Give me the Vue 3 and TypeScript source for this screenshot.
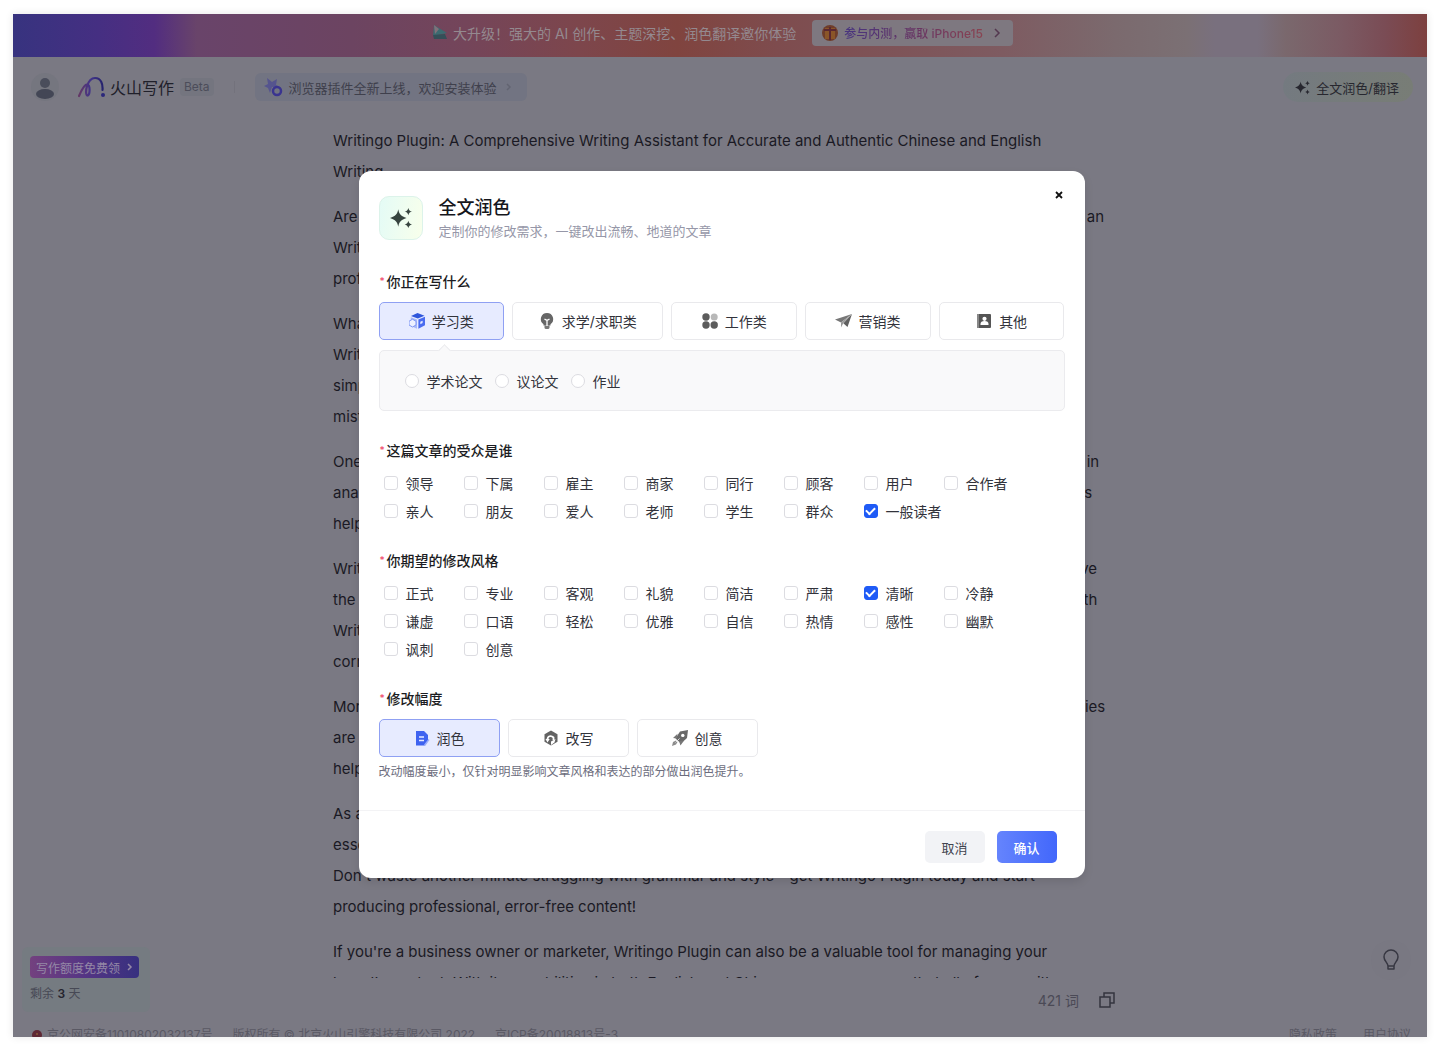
<script setup lang="ts">
import { ref } from 'vue'

interface Option {
  label: string
  icon: string
  wide?: boolean
}

const paragraphs: string[][] = [
  [
    'Writingo Plugin: A Comprehensive Writing Assistant for Accurate and Authentic Chinese and English',
    'Writing',
  ],
  [
    'Are you tired of making grammar mistakes in your writing and looking for a powerful solution every day as an',
    'Writingo Plugin is the tool you need to improve your writing, whether you are a student or a',
    'professional writer.',
  ],
  [
    'What sets Writingo Plugin apart from other writing tools is its full support for two languages.',
    'Writingo Plugin can check your spelling, grammar and punctuation in Chinese and English,',
    'simply by installing it in your browser, so that you can write freely without worrying about',
    'mistakes.',
  ],
  [
    'One of the great features of Writingo Plugin is the advanced and accurate artificial intelligence that is built in',
    'analyzing your text as you type, it also offers suggestions for grammar, word choice, clarity and tone errors',
    'helping you to write better.',
  ],
  [
    'Writingo Plugin also offers you detailed feedback on your writing, so that you can always study and improve',
    'the quality of your work over time. It describes each suggestion and lets you compare all of the options with',
    'Writing samples, so that each of your sentences is clear, fluent and',
    'correct.',
  ],
  [
    'Moreover, Writingo Plugin is easy to install and works with all of the major web sites and business companies',
    'are able to use it every day for their emails, documents and reports, which can',
    'help teams save time.',
  ],
  [
    'As a writer, you know how important good writing is. Writingo Plugin is an',
    'essential tool for anyone who wants to write well in English and Chinese.',
    "Don't waste another minute struggling with grammar and style - get Writingo Plugin today and start",
    'producing professional, error-free content!',
  ],
  [
    "If you're a business owner or marketer, Writingo Plugin can also be a valuable tool for managing your",
    "brand's content. With its capabilities in both English and Chinese, you can ensure that all of your writt",
  ],
]

const kinds: Option[] = [
  {
    label: '学习类',
    icon: '<path d="M8.5 0 15.500 2.700 8.800 5.600 2 3.100Z" fill="#2f56dc"/><path d="M9.400 6.500 16 3.700V12.200L9.400 15.800Z" fill="#4a6cf0"/><path d="M11.300 8.700 13.600 7.700V10L11.300 11.200Z" fill="#e6ebff"/><path d="M1.800 4.200 8 6.500V15.800L1.800 13Z" fill="#a9b9f8"/><path d="M3.500 6.200 7 8.300V12L3.500 14 0 12V8.300Z" fill="#eef1ff" stroke="#7f97f5" stroke-width="1"/>',
  },
  {
    label: '求学/求职类',
    wide: true,
    icon: '<path d="M8 0a6.200 6.200 0 0 1 3.500 11.300V12.500h-7V11.300A6.200 6.200 0 0 1 8 0Z" fill="#666"/><path d="M5.500 12.500h5v1.900a1.600 1.600 0 0 1-1.600 1.600H7.100A1.600 1.600 0 0 1 5.500 14.400Z" fill="#777"/><path d="M8 13V7M5.500 6.200 8 7.300l2.500-1.100" fill="none" stroke="#fff" stroke-width="1.300"/>',
  },
  {
    label: '工作类',
    icon: '<circle cx="4" cy="4" r="3.700" fill="#5c5c5c"/><circle cx="12.200" cy="4" r="3.500" fill="#b8b8b8"/><circle cx="4" cy="12" r="3.700" fill="#5c5c5c"/><circle cx="12.200" cy="12" r="3.700" fill="#5c5c5c"/>',
  },
  {
    label: '营销类',
    icon: '<path d="M0 6.500 17 1 6 9.500Z" fill="#777"/><path d="M17 1 12.500 14 8.300 10.200Z" fill="#606060"/><path d="M17 1 6 9.500v5l2.300-4.300Z" fill="#999"/>',
  },
  {
    label: '其他',
    icon: '<rect x="1" y="1" width="14" height="14" rx="1" fill="#555"/><rect x="1" y="1" width="2" height="14" fill="#888"/><circle cx="8.500" cy="5.800" r="2.100" fill="#fff"/><path d="M4.500 12V11a4 3 0 0 1 8 0v1Z" fill="#fff"/>',
  },
]

const levels: Option[] = [
  {
    label: '润色',
    icon: '<path d="M2 1h8l4 4v6l-3 4.500H2Z" fill="#3f63f0"/><path d="M5 7h5M5 10.500h5" stroke="#e6ebff" stroke-width="1.300"/><path d="m14.500 9 1 1-4 5.500-1.500.5.300-1.800Z" fill="#9db0fa"/>',
  },
  {
    label: '改写',
    icon: '<path d="M8 .5 14.500 4.200V11.800L8 15.500 1.500 11.800V4.200Z" fill="#636363"/><path d="M4.500 9.500C4.500 6 8 5 10.500 7.500V10" fill="none" stroke="#fff" stroke-width="1.800"/><path d="M2.500 9h4.200L4.500 12.500ZM8 11.500l4.500-2.500-1 3.500L8 15Z" fill="#fff"/>',
  },
  {
    label: '创意',
    icon: '<path d="M8 1.500 16 0l-1 8-6 5.500-5.500-5Z" fill="#686868"/><path d="M5.500 3.800 1 8l4 .5ZM12 10.500 8.500 15.500 7 11Z" fill="#777"/><path d="M4 10.500 1 12 0 16l4-1.500 1.500-2.500Z" fill="#8c8c8c"/><circle cx="10.800" cy="5.400" r="1.700" fill="#fff"/><path d="m3.500 12.500 4-4" stroke="#ddd" stroke-width="1"/>',
  },
]

const sparkle =
  'M9 2.500C10 8 12 10 18 12 12 14 10 16 9 21.500 8 16 6 14 0 12 6 10 8 8 9 2.500Z' +
  'M20 1C20.700 3.500 21.500 4.300 24 5 21.500 5.700 20.700 6.500 20 9 19.300 6.500 18.500 5.700 16 5 18.500 4.300 19.300 3.500 20 1Z' +
  'M20 15C20.700 17.500 21.500 18.300 24 19 21.500 19.700 20.700 20.500 20 23 19.300 20.500 18.500 19.700 16 19 18.500 18.300 19.300 17.500 20 15Z'

const topics = ['学术论文', '议论文', '作业']
const audiences = ['领导', '下属', '雇主', '商家', '同行', '顾客', '用户', '合作者', '亲人', '朋友', '爱人', '老师', '学生', '群众', '一般读者']
const styles = ['正式', '专业', '客观', '礼貌', '简洁', '严肃', '清晰', '冷静', '谦虚', '口语', '轻松', '优雅', '自信', '热情', '感性', '幽默', '讽刺', '创意']

const kind = ref('学习类')
const level = ref('润色')
const topic = ref('')
const audience = ref<string[]>(['一般读者'])
const style = ref<string[]>(['清晰'])
const open = ref(true)
</script>

<template>
  <div class="screen">
    <div class="app">
      <div class="banner">
        <svg class="banner-flag" viewBox="0 0 18 18" aria-hidden="true">
          <path d="M3 1 16 9 2 12Z" fill="#3c6a70" /><path d="M2 11 14 10 16 15 3 15Z" fill="#344f58" /><path d="M3 1 8 5 4 10Z" fill="#80717a" />
        </svg>
        <span class="banner-text">大升级！强大的 AI 创作、主题深挖、润色翻译邀你体验</span>
        <a href="#" class="banner-link">
          <svg class="gift" viewBox="0 0 18 18" aria-hidden="true">
            <circle cx="9" cy="9" r="8" fill="#6f3d2a" /><path d="M4 4h10v11H4Z" fill="#8a5528" /><path d="M9 3v13M3 6h12" stroke="#5a2731" stroke-width="2" />
          </svg>
          <span class="prize">参与内测，赢取 iPhone15</span>
          <svg class="chev" viewBox="0 0 8 10" aria-hidden="true"><path d="m2 1 4 4-4 4" /></svg>
        </a>
      </div>

      <header class="header">
        <svg class="avatar" viewBox="0 0 28 28" aria-hidden="true">
          <circle cx="14" cy="14" r="14" fill="#75767f" /><circle cx="14" cy="10" r="5" fill="#4a4d5b" /><ellipse cx="14" cy="21" rx="9" ry="5" fill="#434655" />
        </svg>
        <svg class="logo" viewBox="0 0 28 22" aria-hidden="true">
          <defs>
            <linearGradient id="brand" x1="0" x2="1"><stop offset="0" stop-color="#643866" /><stop offset=".5" stop-color="#41348a" /><stop offset="1" stop-color="#26236e" /></linearGradient>
          </defs>
          <path d="M1 20C4 13 7 8 9.500 8.500c3 1 2.500 11.500 0 11C6 18.500 9 2 17 2c6 0 8 6 7.500 12" fill="none" stroke="url(#brand)" stroke-width="2.200" stroke-linecap="round" />
          <circle cx="25" cy="19" r="2" fill="#2b287b" />
        </svg>
        <span class="name">火山写作</span>
        <span class="beta">Beta</span>
        <span class="divider"></span>
        <a href="#" class="plugin">
          <svg class="plugin-icon" viewBox="0 0 20 20" aria-hidden="true">
            <path d="M4 1 9 5 14 2 13 8 17 10H9L7 16 5 11 1 9 5 7Z" fill="#55548e" /><circle cx="14" cy="14" r="4" fill="none" stroke="#3a3490" stroke-width="2.500" />
          </svg>
          <span>浏览器插件全新上线，欢迎安装体验</span>
          <svg class="chev faint" viewBox="0 0 8 10" aria-hidden="true"><path d="m2 2 3 3-3 3" /></svg>
        </a>
        <button type="button" class="polish" @click="open = true">
          <svg class="spark" viewBox="0 0 24 24" aria-hidden="true"><path :d="sparkle" /></svg>
          全文润色/翻译
        </button>
      </header>

      <main class="editor">
        <article class="document">
          <p v-for="(lines, i) in paragraphs" :key="i">
            <span v-for="line in lines" :key="line" class="line">{{ line }}</span>
          </p>
        </article>
      </main>

      <div class="status">
        <span>421 词</span>
        <button type="button" class="copy" aria-label="复制">
          <svg viewBox="0 0 16 16" aria-hidden="true"><path d="M1 5h10v10H1ZM5 5V1h10v10h-4" /></svg>
        </button>
      </div>

      <footer class="legal">
        <svg class="badge" viewBox="0 0 12 12" aria-hidden="true"><circle cx="6" cy="6" r="5" fill="#5f2834" /><circle cx="6" cy="5" r="1" fill="#8a5a3a" /></svg>
        <span>京公网安备11010802032137号</span>
        <span>版权所有 © 北京火山引擎科技有限公司 2022</span>
        <span>京ICP备20018813号-3</span>
        <a href="#" class="first-link">隐私政策</a>
        <a href="#">用户协议</a>
      </footer>

      <aside class="quota">
        <button type="button" class="quota-button">
          写作额度免费领
          <svg class="chev" viewBox="0 0 8 10" aria-hidden="true"><path d="m3 2 3 3-3 3" /></svg>
        </button>
        <div class="quota-left">剩余 <b>3</b> 天</div>
      </aside>
      <button type="button" class="tips" aria-label="提示">
        <svg viewBox="0 0 18 22" aria-hidden="true"><path d="M6 17c0-3-4-5-4-9a7 7 0 0 1 14 0c0 4-4 6-4 9ZM6 17v3h6v-3" /></svg>
      </button>

      <div v-if="open" class="overlay">
        <form class="modal" role="dialog" aria-labelledby="dialog-title" @submit.prevent="open = false">
          <div class="body">
            <div class="head">
              <div class="head-icon">
                <svg viewBox="0 0 24 24" aria-hidden="true"><path :d="sparkle" /></svg>
              </div>
              <div>
                <h2 id="dialog-title">全文润色</h2>
                <p class="sub">定制你的修改需求，一键改出流畅、地道的文章</p>
              </div>
              <button type="button" class="close" aria-label="关闭" @click="open = false">
                <svg viewBox="0 0 8 8" aria-hidden="true"><path d="m1 1 6 6M7 1 1 7" /></svg>
              </button>
            </div>

            <section>
              <h3>你正在写什么</h3>
              <div class="choices">
                <button
                  v-for="k in kinds"
                  :key="k.label"
                  type="button"
                  class="choice"
                  :class="{ active: kind === k.label, wide: k.wide }"
                  :aria-pressed="kind === k.label"
                  @click="kind = k.label"
                >
                  <svg viewBox="0 0 17 16" aria-hidden="true" v-html="k.icon"></svg>
                  {{ k.label }}
                </button>
              </div>
              <div class="panel">
                <label v-for="t in topics" :key="t" class="option">
                  <input v-model="topic" type="radio" name="topic" :value="t" />{{ t }}
                </label>
              </div>
            </section>

            <section>
              <h3>这篇文章的受众是谁</h3>
              <div class="grid">
                <label v-for="a in audiences" :key="a" class="option">
                  <input v-model="audience" type="checkbox" :value="a" />{{ a }}
                </label>
              </div>
            </section>

            <section>
              <h3>你期望的修改风格</h3>
              <div class="grid">
                <label v-for="s in styles" :key="s" class="option">
                  <input v-model="style" type="checkbox" :value="s" />{{ s }}
                </label>
              </div>
            </section>

            <section>
              <h3>修改幅度</h3>
              <div class="choices levels">
                <button
                  v-for="l in levels"
                  :key="l.label"
                  type="button"
                  class="choice"
                  :class="{ active: level === l.label }"
                  :aria-pressed="level === l.label"
                  @click="level = l.label"
                >
                  <svg viewBox="0 0 17 16" aria-hidden="true" v-html="l.icon"></svg>
                  {{ l.label }}
                </button>
              </div>
              <p class="hint">改动幅度最小，仅针对明显影响文章风格和表达的部分做出润色提升。</p>
            </section>
          </div>

          <div class="actions">
            <button type="button" class="cancel" @click="open = false">取消</button>
            <button type="submit" class="confirm">确认</button>
          </div>
        </form>
      </div>
    </div>
  </div>
</template>

<style>
body {
  margin: 0;
  background: #fff;
}
</style>

<style scoped>
.screen {
  box-sizing: border-box;
  height: 100vh;
  padding: 14px 13px 12px;
  font-family: Inter, "Noto Sans CJK SC", sans-serif;
  font-size: 14px;
}
.screen * {
  box-sizing: border-box;
}
button {
  font: inherit;
  margin: 0;
  padding: 0;
  border: 0;
  background: none;
  cursor: pointer;
}
a {
  color: inherit;
  text-decoration: none;
}
h2, h3, p {
  margin: 0;
}
svg {
  flex: none;
  display: block;
}
.app {
  position: relative;
  display: flex;
  flex-direction: column;
  height: 100%;
  overflow: hidden;
  background: #7a7983;
  box-shadow: 0 0 8px rgba(0, 0, 0, 0.1);
}

.banner {
  flex: none;
  display: flex;
  align-items: center;
  justify-content: center;
  height: 43px;
  padding: 0 0 6px 4px;
  background: linear-gradient(90deg, #37337f 0%, #452f82 6%, #522d80 10%, #69446a 13%, #6c4461 24%, #74455a 32%, #7d464c 40%, #80443f 47%, #7e4c4e 54%, #7e5b61 70%, #7b6a6e 78%, #7b7074 83%, #79707e 85%, #79707e 88%, #7a686d 90%, #7b5a63 94%, #7a4c55 97%, #7d403f 100%);
  color: #94898f;
}
.banner-flag {
  width: 18px;
  height: 18px;
  margin-right: 4px;
}
.banner-link {
  display: flex;
  align-items: center;
  height: 26px;
  margin-left: 16px;
  padding: 0 12px 0 9px;
  border-radius: 4px;
  background: #7e7880;
  font-size: 12px;
  color: #54384f;
}
.gift {
  width: 18px;
  height: 18px;
  margin-right: 5px;
}
.prize {
  margin-right: 10px;
  background: linear-gradient(90deg, #47347f, #6a3562 55%, #8a4350);
  background-clip: text;
  color: transparent;
  font-weight: 500;
}
.chev {
  width: 8px;
  height: 10px;
  fill: none;
  stroke: currentColor;
  stroke-width: 1.5;
}
.faint {
  opacity: 0.3;
}

.header {
  flex: none;
  display: flex;
  align-items: center;
  height: 60px;
  padding: 0 14px 0 18px;
}
.avatar {
  width: 28px;
  height: 28px;
}
.logo {
  width: 28px;
  height: 22px;
  margin-left: 19px;
}
.name {
  margin-left: 4px;
  font-size: 16px;
  color: #20202a;
}
.beta {
  margin-left: 6px;
  padding: 0 4px;
  border-radius: 4px;
  background: #74757f;
  font-size: 12px;
  line-height: 18px;
  color: #4c4d5a;
}
.divider {
  width: 1px;
  height: 12px;
  margin: 0 20px;
  background: #73727c;
}
.plugin {
  display: flex;
  align-items: center;
  height: 28px;
  padding: 0 14px 0 8px;
  border-radius: 6px;
  background: #727482;
  font-size: 13px;
  color: #3f404c;
}
.plugin-icon {
  width: 20px;
  height: 20px;
  margin-right: 6px;
}
.plugin .chev {
  margin-left: 8px;
}
.polish {
  display: flex;
  align-items: center;
  gap: 6px;
  height: 30px;
  margin-left: auto;
  padding: 0 14px 0 12px;
  border-radius: 15px;
  background: linear-gradient(90deg, #747a80, #787d76);
  font-size: 13px;
  color: #27272f;
}
.spark {
  width: 15px;
  height: 15px;
  fill: #27272f;
}

.editor {
  flex: 1;
  min-height: 0;
  overflow: hidden;
  padding-top: 8px;
}
.document {
  max-width: 774px;
  margin: 0 auto;
  font-size: 15px;
  line-height: 31px;
  color: #1a1924;
}
.document p {
  margin-bottom: 14px;
}
.line {
  display: block;
  white-space: nowrap;
}
.status {
  flex: none;
  display: flex;
  align-items: center;
  justify-content: flex-end;
  gap: 20px;
  width: 100%;
  max-width: 790px;
  height: 44px;
  margin: 0 auto;
  color: #4b4a56;
}
.copy svg {
  width: 16px;
  height: 16px;
  fill: none;
  stroke: #34353f;
  stroke-width: 1.5;
}
.legal {
  flex: none;
  display: flex;
  gap: 20px;
  height: 15px;
  padding: 0 16px 0 18px;
  overflow: hidden;
  font-size: 12px;
  line-height: 26px;
  color: #595863;
}
.badge {
  width: 12px;
  height: 12px;
  margin: 7px -16px 0 0;
}
.first-link {
  margin-left: auto;
  margin-right: 6px;
}
.quota {
  position: absolute;
  left: 9px;
  bottom: 25px;
  width: 128px;
  height: 65px;
  padding: 9px 8px;
  border-radius: 6px;
  background: #757b81;
  font-size: 12px;
  color: #474955;
}
.quota-button {
  display: flex;
  align-items: center;
  gap: 5px;
  height: 22px;
  padding: 0 6px;
  border-radius: 4px;
  background: linear-gradient(90deg, #73417f, #553584 50%, #37307f);
  color: #9488a6;
}
.quota-left {
  margin-top: 7px;
  line-height: 18px;
}
.quota-left b {
  font-weight: 600;
  color: #24242e;
}
.tips {
  position: absolute;
  right: 16px;
  bottom: 57px;
  display: grid;
  place-items: center;
  width: 40px;
  height: 40px;
  border-radius: 50%;
  background: #797882;
}
.tips svg {
  width: 18px;
  height: 22px;
  fill: none;
  stroke: #373742;
  stroke-width: 1.5;
  stroke-linejoin: round;
}

.overlay {
  position: absolute;
  inset: 0;
  display: flex;
  align-items: center;
  justify-content: center;
  padding: 0 0 2px 3px;
}
.modal {
  width: 726px;
  border-radius: 12px;
  background: #fff;
  box-shadow: 0 4px 10px rgba(0, 0, 0, 0.1);
  color: #32333b;
}
.body {
  padding: 25px 20px 28px;
  border-bottom: 1px solid #f3f3f5;
}
.head {
  display: flex;
  gap: 16px;
}
.head-icon {
  display: grid;
  place-items: center;
  width: 44px;
  height: 44px;
  border: 1px solid #dcf3ea;
  border-radius: 10px;
  background: linear-gradient(100deg, #e4fbf6, #f8ffeb);
}
.head-icon svg {
  width: 22px;
  height: 22px;
  fill: #36443f;
}
h2 {
  font-size: 18px;
  font-weight: 500;
  line-height: 24px;
  color: #15161c;
}
.sub {
  font-size: 13px;
  line-height: 22px;
  color: #9697a8;
}
.close {
  display: grid;
  place-items: center;
  width: 12px;
  height: 12px;
  margin-left: auto;
  margin-top: -7px;
}
.close svg {
  width: 8px;
  height: 8px;
  stroke: #111;
  stroke-width: 1.8;
}
section {
  margin-top: 26px;
}
.head + section {
  margin-top: 30px;
  margin-bottom: 30px;
}
h3 {
  position: relative;
  padding-left: 8px;
  font-size: 14px;
  font-weight: 500;
  line-height: 20px;
  color: #1b1c22;
}
h3::before {
  content: "*";
  position: absolute;
  left: 1px;
  top: -1px;
  font-size: 10px;
  color: #f04a6a;
}
.choices {
  display: flex;
  gap: 8px;
  margin-top: 10px;
}
.choice {
  flex: 126 1 0;
  display: flex;
  align-items: center;
  justify-content: center;
  gap: 6px;
  height: 38px;
  border: 1px solid #e9e9ec;
  border-radius: 5px;
  background: #fff;
  color: #32333b;
}
.choice.wide {
  flex-grow: 152;
}
.choice svg {
  width: 17px;
  height: 16px;
}
.choice.active {
  border-color: #8fa0f3;
  background: #e7ebff;
}
.levels .choice {
  flex: none;
  width: 121px;
}
.panel {
  position: relative;
  display: flex;
  align-items: center;
  gap: 12px;
  height: 61px;
  margin-top: 10px;
  padding: 0 25px;
  border: 1px solid #ebebee;
  border-radius: 5px;
  background: #f9f9fa;
}
.panel::before {
  content: "";
  position: absolute;
  left: 60px;
  top: -5px;
  width: 8px;
  height: 8px;
  border: 1px solid #ebebee;
  border-right: 0;
  border-bottom: 0;
  background: #f9f9fa;
  transform: rotate(45deg);
}
.grid {
  display: grid;
  grid-template-columns: repeat(8, 80px);
  margin-top: 8px;
  padding-left: 5px;
}
.option {
  display: flex;
  align-items: center;
  gap: 8px;
  height: 28px;
  white-space: nowrap;
  cursor: pointer;
}
.option input {
  appearance: none;
  flex: none;
  display: grid;
  place-items: center;
  width: 14px;
  height: 14px;
  margin: 0;
  border: 1px solid #dcdce1;
  border-radius: 3px;
  background: #fff;
}
.option input[type="radio"] {
  border-radius: 50%;
}
.option input:checked {
  border-color: #1f5bf6;
  background: #1f5bf6;
}
.option input[type="checkbox"]:checked::before {
  content: "";
  width: 7px;
  height: 4px;
  margin-bottom: 2px;
  border: solid #fff;
  border-width: 0 0 2px 2px;
  transform: rotate(-45deg);
}
.option input[type="radio"]:checked::before {
  content: "";
  width: 6px;
  height: 6px;
  border-radius: 50%;
  background: #fff;
}
.hint {
  margin-top: 5px;
  font-size: 12px;
  line-height: 20px;
  color: #6c6d7d;
}
.actions {
  display: flex;
  justify-content: flex-end;
  gap: 12px;
  padding: 20px 28px 15px;
}
.actions button {
  width: 60px;
  height: 32px;
  border-radius: 5px;
  font-size: 13px;
}
.cancel {
  background: #f2f3f6;
  color: #41434f;
}
.actions .confirm {
  background: linear-gradient(90deg, #6584fd, #4267fb);
  color: #fff;
  font-weight: 500;
}
</style>
